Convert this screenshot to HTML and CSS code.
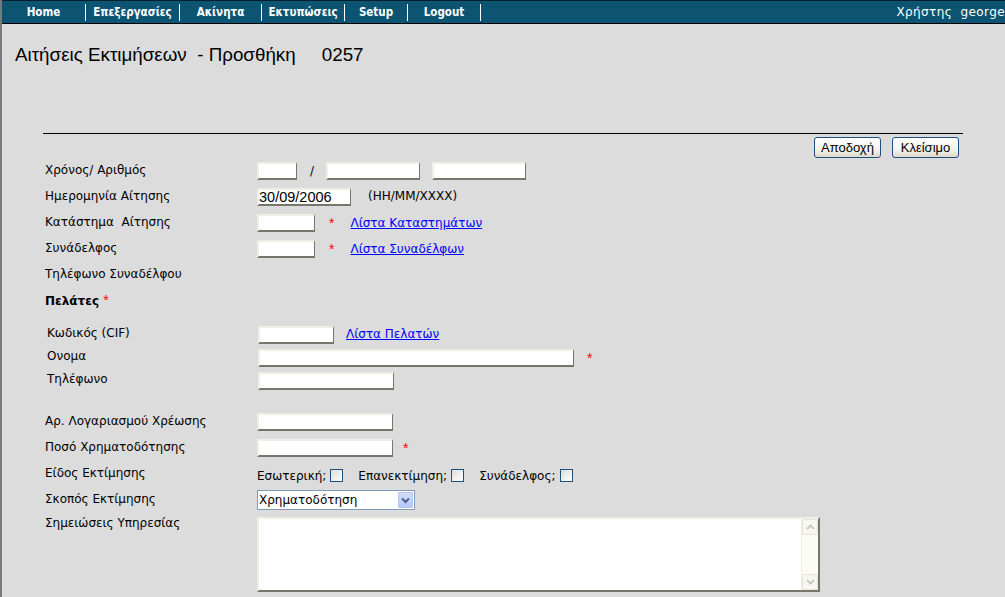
FILE: index.html
```html
<!DOCTYPE html>
<html lang="el">
<head>
<meta charset="utf-8">
<title>Αιτήσεις Εκτιμήσεων</title>
<link rel="stylesheet" href="styles.css">
</head>
<body>
<div class="nav">
  <a class="nav-item nav-home">Home</a>
  <a class="nav-item nav-edit">Επεξεργασίες</a>
  <a class="nav-item nav-prop">Ακίνητα</a>
  <a class="nav-item nav-print">Εκτυπώσεις</a>
  <a class="nav-item nav-setup">Setup</a>
  <a class="nav-item nav-logout">Logout</a>
  <span class="user">Χρήστης&nbsp; george</span>
</div>

<div class="title">Αιτήσεις Εκτιμήσεων&nbsp; - Προσθήκη&nbsp;&nbsp;&nbsp;&nbsp; 0257</div>

<div class="main">
  <div class="rule"></div>
  <div class="actions">
    <button class="btn">Αποδοχή</button>
    <button class="btn">Κλείσιμο</button>
  </div>

  <div class="row">
    <span class="label">Χρόνος/ Αριθμός</span>
    <input class="field w40" type="text">
    <span class="slash">/</span>
    <input class="field w94" type="text">
    <input class="field w94 gap12" type="text">
  </div>
  <div class="row">
    <span class="label">Ημερομηνία Αίτησης</span>
    <input class="field field-date w94" type="text" value="30/09/2006">
    <span class="hint">(ΗΗ/ΜΜ/ΧΧΧΧ)</span>
  </div>
  <div class="row">
    <span class="label">Κατάστημα&nbsp; Αίτησης</span>
    <input class="field w58" type="text">
    <span class="req">*</span>
    <a class="link" href="#">Λίστα Καταστημάτων</a>
  </div>
  <div class="row">
    <span class="label">Συνάδελφος</span>
    <input class="field w58" type="text">
    <span class="req">*</span>
    <a class="link" href="#">Λίστα Συναδέλφων</a>
  </div>
  <div class="row">
    <span class="label">Τηλέφωνο Συναδέλφου</span>
  </div>
  <div class="row">
    <span class="label label-bold">Πελάτες <span class="req-inline">*</span></span>
  </div>

  <div class="sub">
    <div class="row row-sub">
      <span class="label label-sub">Κωδικός (CIF)</span>
      <input class="field w76" type="text">
      <a class="link link-near" href="#">Λίστα Πελατών</a>
    </div>
    <div class="row row-sub">
      <span class="label label-sub">Ονομα</span>
      <input class="field w316" type="text">
      <span class="req req-near">*</span>
    </div>
    <div class="row row-sub">
      <span class="label label-sub">Τηλέφωνο</span>
      <input class="field w136" type="text">
    </div>
  </div>

  <div class="sec2">
    <div class="row">
      <span class="label">Αρ. Λογαριασμού Χρέωσης</span>
      <input class="field w136" type="text">
    </div>
    <div class="row">
      <span class="label">Ποσό Χρηματοδότησης</span>
      <input class="field w136" type="text">
      <span class="req req-tight">*</span>
    </div>
    <div class="row">
      <span class="label">Είδος Εκτίμησης</span>
      <span class="checks">
        <span class="chk-text">Εσωτερική;</span><input class="chk" type="checkbox">
        <span class="chk-text chk-gap">Επανεκτίμηση;</span><input class="chk" type="checkbox">
        <span class="chk-text chk-gap">Συνάδελφος;</span><input class="chk" type="checkbox">
      </span>
    </div>
    <div class="row">
      <span class="label">Σκοπός Εκτίμησης</span>
      <div class="select">
        <select class="select-native"><option>Χρηματοδότηση</option></select>
        <span class="select-btn">
          <svg width="9" height="7" viewBox="0 0 9 7"><path d="M1 1.5 L4.5 5 L8 1.5" fill="none" stroke="#4d6185" stroke-width="2"/></svg>
        </span>
      </div>
    </div>
    <div class="row row-top">
      <span class="label label-top">Σημειώσεις Υπηρεσίας</span>
      <div class="notes">
        <textarea class="notes-text"></textarea>
        <div class="scroll">
          <span class="scroll-btn">
            <svg width="9" height="6" viewBox="0 0 9 6"><path d="M1 5 L4.5 1.5 L8 5" fill="none" stroke="#c3c3bb" stroke-width="1.6"/></svg>
          </span>
          <span class="scroll-btn">
            <svg width="9" height="6" viewBox="0 0 9 6"><path d="M1 1 L4.5 4.5 L8 1" fill="none" stroke="#c3c3bb" stroke-width="1.6"/></svg>
          </span>
        </div>
      </div>
    </div>
  </div>
</div>
</body>
</html>
```
FILE: styles.css
```css
* { box-sizing: border-box; }
html, body { margin: 0; padding: 0; }
body {
  background: #dcdcdc;
  border-left: 2px solid #7a7a7a;
  height: 597px;
  overflow: hidden;
  font-family: "DejaVu Sans", Verdana, sans-serif;
  font-size: 12px;
  color: #000;
}

/* top navigation */
.nav {
  display: flex;
  align-items: flex-start;
  height: 24px;
  background: #0c5472;
  border-top: 1px solid #05202c;
  border-bottom: 1px solid #000;
}
.nav-item {
  flex: none;
  height: 17px;
  margin-top: 3px;
  border-right: 1px solid #fff;
  color: #fff;
  font-family: "DejaVu Sans Condensed", "DejaVu Sans", sans-serif;
  font-stretch: condensed;
  font-weight: bold;
  font-size: 11.5px;
  line-height: 17px;
  text-align: center;
  text-decoration: none;
}
.nav-home { width: 84px; }
.nav-edit { width: 94px; }
.nav-prop { width: 82px; }
.nav-print { width: 83px; }
.nav-setup { width: 63px; }
.nav-logout { width: 73px; }
.user {
  margin-left: auto;
  color: #fff;
  line-height: 22px;
  white-space: nowrap;
  letter-spacing: 0.4px;
  font-size: 12px;
}

/* title */
.title {
  font-family: "Liberation Sans", Arial, sans-serif;
  font-size: 18.8px;
  line-height: 22px;
  margin: 20px 0 0 13px;
}

.main {
  margin: 67px 0 0 41px;
  width: 920px;
}
.rule { height: 1px; background: #000; }
.actions {
  display: flex;
  justify-content: flex-end;
  gap: 11px;
  margin-top: 3px;
  padding-right: 4px;
}
.btn {
  width: 67px;
  height: 21px;
  padding: 0;
  border: 1px solid #1f4f82;
  border-radius: 3px;
  background: linear-gradient(#ffffff, #f4f3ee 60%, #dcd8cc);
  font-family: "Liberation Sans", Arial, sans-serif;
  font-size: 13px;
  color: #000;
}

/* form rows */
.row {
  display: flex;
  align-items: center;
  height: 26px;
  padding-left: 2px;
}
.label {
  flex: none;
  width: 212px;
  padding-bottom: 3px;
  white-space: nowrap;
}
.label-bold { font-weight: bold; }
.req-inline { color: #f00; font-weight: normal; font-family: "Liberation Sans", Arial, sans-serif; font-size: 14px; }

.field {
  flex: none;
  height: 18px;
  margin: 0;
  padding: 0 2px;
  background: #fff;
  border-style: solid;
  border-width: 2px 1px 2px 2px;
  border-color: #efeee2 #77766b #77766b #efeee2;
  font-family: "Liberation Sans", Arial, sans-serif;
  font-size: 13px;
  color: #000;
  outline: none;
}
.field-date { font-size: 14.5px; padding-left: 0; }
.w40 { width: 40px; }
.w58 { width: 58px; }
.w76 { width: 76px; }
.w94 { width: 94px; }
.w136 { width: 136px; }
.w316 { width: 316px; }
.gap12 { margin-left: 12px; }
.slash { margin: 0 12px 0 13px; }
.hint { margin-left: 17px; padding-bottom: 2px; }
.req {
  color: #f00;
  font-family: "Liberation Sans", Arial, sans-serif;
  font-size: 14px;
  margin: 0 16px 0 14px;
}
.req-near { margin-left: 13px; }
.req-tight { margin-left: 10px; }
.link { color: #00f; text-decoration: underline; padding-bottom: 1px; }
.link-near { margin-left: 12px; }

.sub { margin-top: 9px; }
.row-sub { height: 23px; padding-left: 4px; }
.label-sub { width: 211px; }

.sec2 { margin-top: 17px; }

.checks { display: flex; align-items: center; padding-top: 3px; }
.chk-text { white-space: nowrap; }
.chk-gap { margin-left: 15px; }
.chk {
  appearance: none;
  -webkit-appearance: none;
  width: 13px;
  height: 13px;
  margin: 0 0 0 4px;
  border: 1px solid #1c5180;
  background: linear-gradient(135deg, #dcdcd7, #ffffff);
}

.select {
  display: flex;
  align-items: center;
  width: 158px;
  height: 20px;
  border: 1px solid #7f9db9;
  background: #fff;
}
.select-native {
  flex: 1;
  min-width: 0;
  height: 18px;
  border: none;
  background: transparent;
  appearance: none;
  -webkit-appearance: none;
  padding: 0 1px;
  font-family: "DejaVu Sans", Verdana, sans-serif;
  font-size: 12px;
  color: #000;
  outline: none;
}
.select-btn {
  display: flex;
  align-items: center;
  justify-content: center;
  width: 15px;
  height: 16px;
  margin-right: 1px;
  background: linear-gradient(#d2defd, #b6c8fb);
  border: 1px solid #b4c6f0;
  border-radius: 1px;
}

.row-top { align-items: flex-start; height: auto; margin-top: 4px; }
.label-top { padding-top: 0; margin-top: -1px; }
.notes {
  display: flex;
  width: 563px;
  height: 75px;
  background: #fff;
  border-style: solid;
  border-width: 2px 2px 2px 2px;
  border-color: #efeee2 #77766b #77766b #efeee2;
}
.notes-text {
  flex: 1;
  border: none;
  resize: none;
  outline: none;
  background: #fff;
  margin: 0;
}
.scroll {
  flex: none;
  display: flex;
  flex-direction: column;
  justify-content: space-between;
  width: 17px;
  background: #fcfcf5;
  border-left: 1px solid #eeede4;
}
.scroll-btn {
  display: flex;
  align-items: center;
  justify-content: center;
  height: 16px;
  border: 1px solid #e6e5dc;
  background: #f7f7f0;
  border-radius: 2px;
}
```
